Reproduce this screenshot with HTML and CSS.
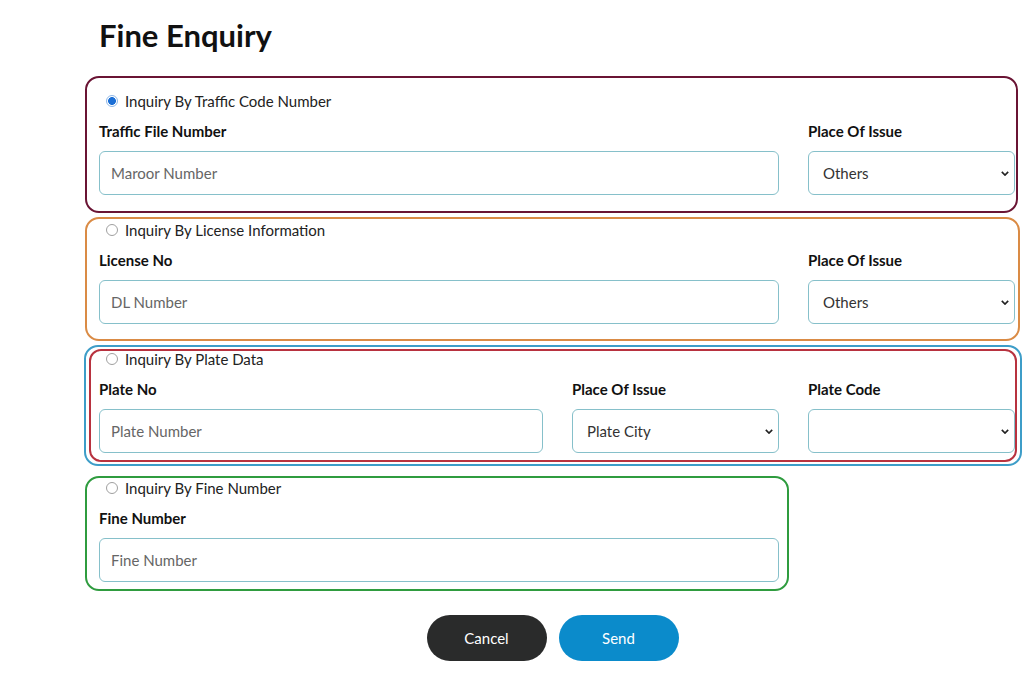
FILE: index.html
```html
<!DOCTYPE html>
<html lang="en">
<head>
    <meta charset="UTF-8">
    <meta name="viewport" content="width=device-width, initial-scale=1.0">
    <title>Fine Enquiry</title>
    <link rel="stylesheet" href="styles.css">
</head>
<body>
    <main class="page">
        <h1 class="title">Fine Enquiry</h1>

        <!-- Traffic code -->
        <section class="group group-traffic">
            <label class="choice">
                <input type="radio" name="inquiry" checked>
                <span>Inquiry By Traffic Code Number</span>
            </label>
            <div class="fields">
                <div class="field span-2">
                    <label for="trafficFile">Traffic File Number</label>
                    <input type="text" id="trafficFile" placeholder="Maroor Number">
                </div>
                <div class="field">
                    <label for="trafficPlace">Place Of Issue</label>
                    <div class="select-box">
                        <select id="trafficPlace"><option>Others</option></select>
                        <svg class="chevron" viewBox="0 0 10 6"><path d="M1 1l4 4 4-4"/></svg>
                    </div>
                </div>
            </div>
        </section>

        <!-- License -->
        <section class="group group-license">
            <label class="choice">
                <input type="radio" name="inquiry">
                <span>Inquiry By License Information</span>
            </label>
            <div class="fields">
                <div class="field span-2">
                    <label for="license">License No</label>
                    <input type="text" id="license" placeholder="DL Number">
                </div>
                <div class="field">
                    <label for="licensePlace">Place Of Issue</label>
                    <div class="select-box">
                        <select id="licensePlace"><option>Others</option></select>
                        <svg class="chevron" viewBox="0 0 10 6"><path d="M1 1l4 4 4-4"/></svg>
                    </div>
                </div>
            </div>
        </section>

        <!-- Plate -->
        <div class="plate-wrap">
            <section class="group group-plate">
                <label class="choice">
                    <input type="radio" name="inquiry">
                    <span>Inquiry By Plate Data</span>
                </label>
                <div class="fields">
                    <div class="field">
                        <label for="plate">Plate No</label>
                        <input type="text" id="plate" placeholder="Plate Number">
                    </div>
                    <div class="field">
                        <label for="plateCity">Place Of Issue</label>
                        <div class="select-box">
                            <select id="plateCity"><option>Plate City</option></select>
                            <svg class="chevron" viewBox="0 0 10 6"><path d="M1 1l4 4 4-4"/></svg>
                        </div>
                    </div>
                    <div class="field">
                        <label for="plateCode">Plate Code</label>
                        <div class="select-box">
                            <select id="plateCode"><option></option></select>
                            <svg class="chevron" viewBox="0 0 10 6"><path d="M1 1l4 4 4-4"/></svg>
                        </div>
                    </div>
                </div>
            </section>
        </div>

        <!-- Fine number -->
        <section class="group group-fine">
            <label class="choice">
                <input type="radio" name="inquiry">
                <span>Inquiry By Fine Number</span>
            </label>
            <div class="fields fields-single">
                <div class="field">
                    <label for="fine">Fine Number</label>
                    <input type="text" id="fine" placeholder="Fine Number">
                </div>
            </div>
        </section>

        <div class="actions">
            <button type="button" class="btn btn-cancel">Cancel</button>
            <button type="button" class="btn btn-send">Send</button>
        </div>
    </main>
</body>
</html>
```

FILE: styles.css
```css
* {
    box-sizing: border-box;
}

body {
    margin: 0;
    background-color: #ffffff;
    color: #1a1a1a;
    font-family: Lato, "Open Sans", sans-serif;
}

.page {
    padding-left: 85px;
}

.title {
    margin: 17px 0 23px 14px;
    font-size: 31px;
    line-height: 36px;
    font-weight: 700;
    color: #111;
}

/* Caixas de cada tipo de consulta */
.group {
    border: 2px solid;
    border-radius: 14px;
}

.group-traffic {
    width: 933px;
    padding: 13px 1px 16px 12px;
    border-color: #6a1434;
}

.group-license {
    width: 935px;
    margin-top: 4px;
    padding: 1px 3px 15px 12px;
    border-color: #da8b45;
}

.plate-wrap {
    width: 938px;
    margin: 4px 0 0 -1px;
    padding: 2px 3px;
    border: 2px solid #3d9dc8;
    border-radius: 14px;
}

.group-plate {
    width: 928px;
    padding: 0 0 7px 8px;
    border-color: #b8323f;
    border-radius: 12px;
}

.group-plate .choice {
    margin-top: -2px;
}

.group-fine {
    width: 704px;
    margin-top: 10px;
    padding: 0 8px 7px 12px;
    border-color: #2f9c3f;
}

.choice {
    display: flex;
    align-items: center;
    height: 20px;
    font-size: 15px;
    color: #222;
}

.choice input {
    appearance: none;
    width: 12px;
    height: 12px;
    margin: 0 7px 0 7px;
    border: 1px solid #a0a0a0;
    border-radius: 50%;
    background-color: #fff;
}

.choice input:checked {
    border-color: #8fb8e8;
    background: radial-gradient(circle, #1b6fd6 0 3.6px, #ffffff 4.2px);
}

.fields {
    display: grid;
    grid-template-columns: 444px 207px 207px;
    column-gap: 29px;
    margin-top: 10px;
}

.fields-single {
    grid-template-columns: 680px;
}

.span-2 {
    grid-column: span 2;
}

.field label {
    display: block;
    height: 20px;
    margin-bottom: 10px;
    font-size: 15px;
    line-height: 20px;
    font-weight: 700;
    color: #111;
}

.field input,
.field select {
    display: block;
    width: 100%;
    height: 44px;
    border: 1px solid #86c0ca;
    border-radius: 6px;
    background-color: #fff;
    font-family: inherit;
    font-size: 15px;
    color: #333;
}

.field input {
    padding: 0 11px;
}

.field input::placeholder {
    color: #666;
}

.select-box {
    position: relative;
}

.field select {
    appearance: none;
    padding: 0 24px 0 14px;
}

.chevron {
    position: absolute;
    top: 20px;
    right: 6px;
    width: 8px;
    height: 5px;
    fill: none;
    stroke: #222;
    stroke-width: 2;
    pointer-events: none;
}

.actions {
    display: flex;
    justify-content: center;
    gap: 12px;
    width: 930px;
    margin-top: 24px;
    padding: 0 9px 0 14px;
}

.btn {
    width: 120px;
    height: 46px;
    border: none;
    border-radius: 23px;
    font-family: inherit;
    font-size: 15px;
    color: #fff;
    cursor: pointer;
}

.btn-cancel {
    background-color: #2a2b2b;
}

.btn-send {
    background-color: #0b8bcb;
}
```
